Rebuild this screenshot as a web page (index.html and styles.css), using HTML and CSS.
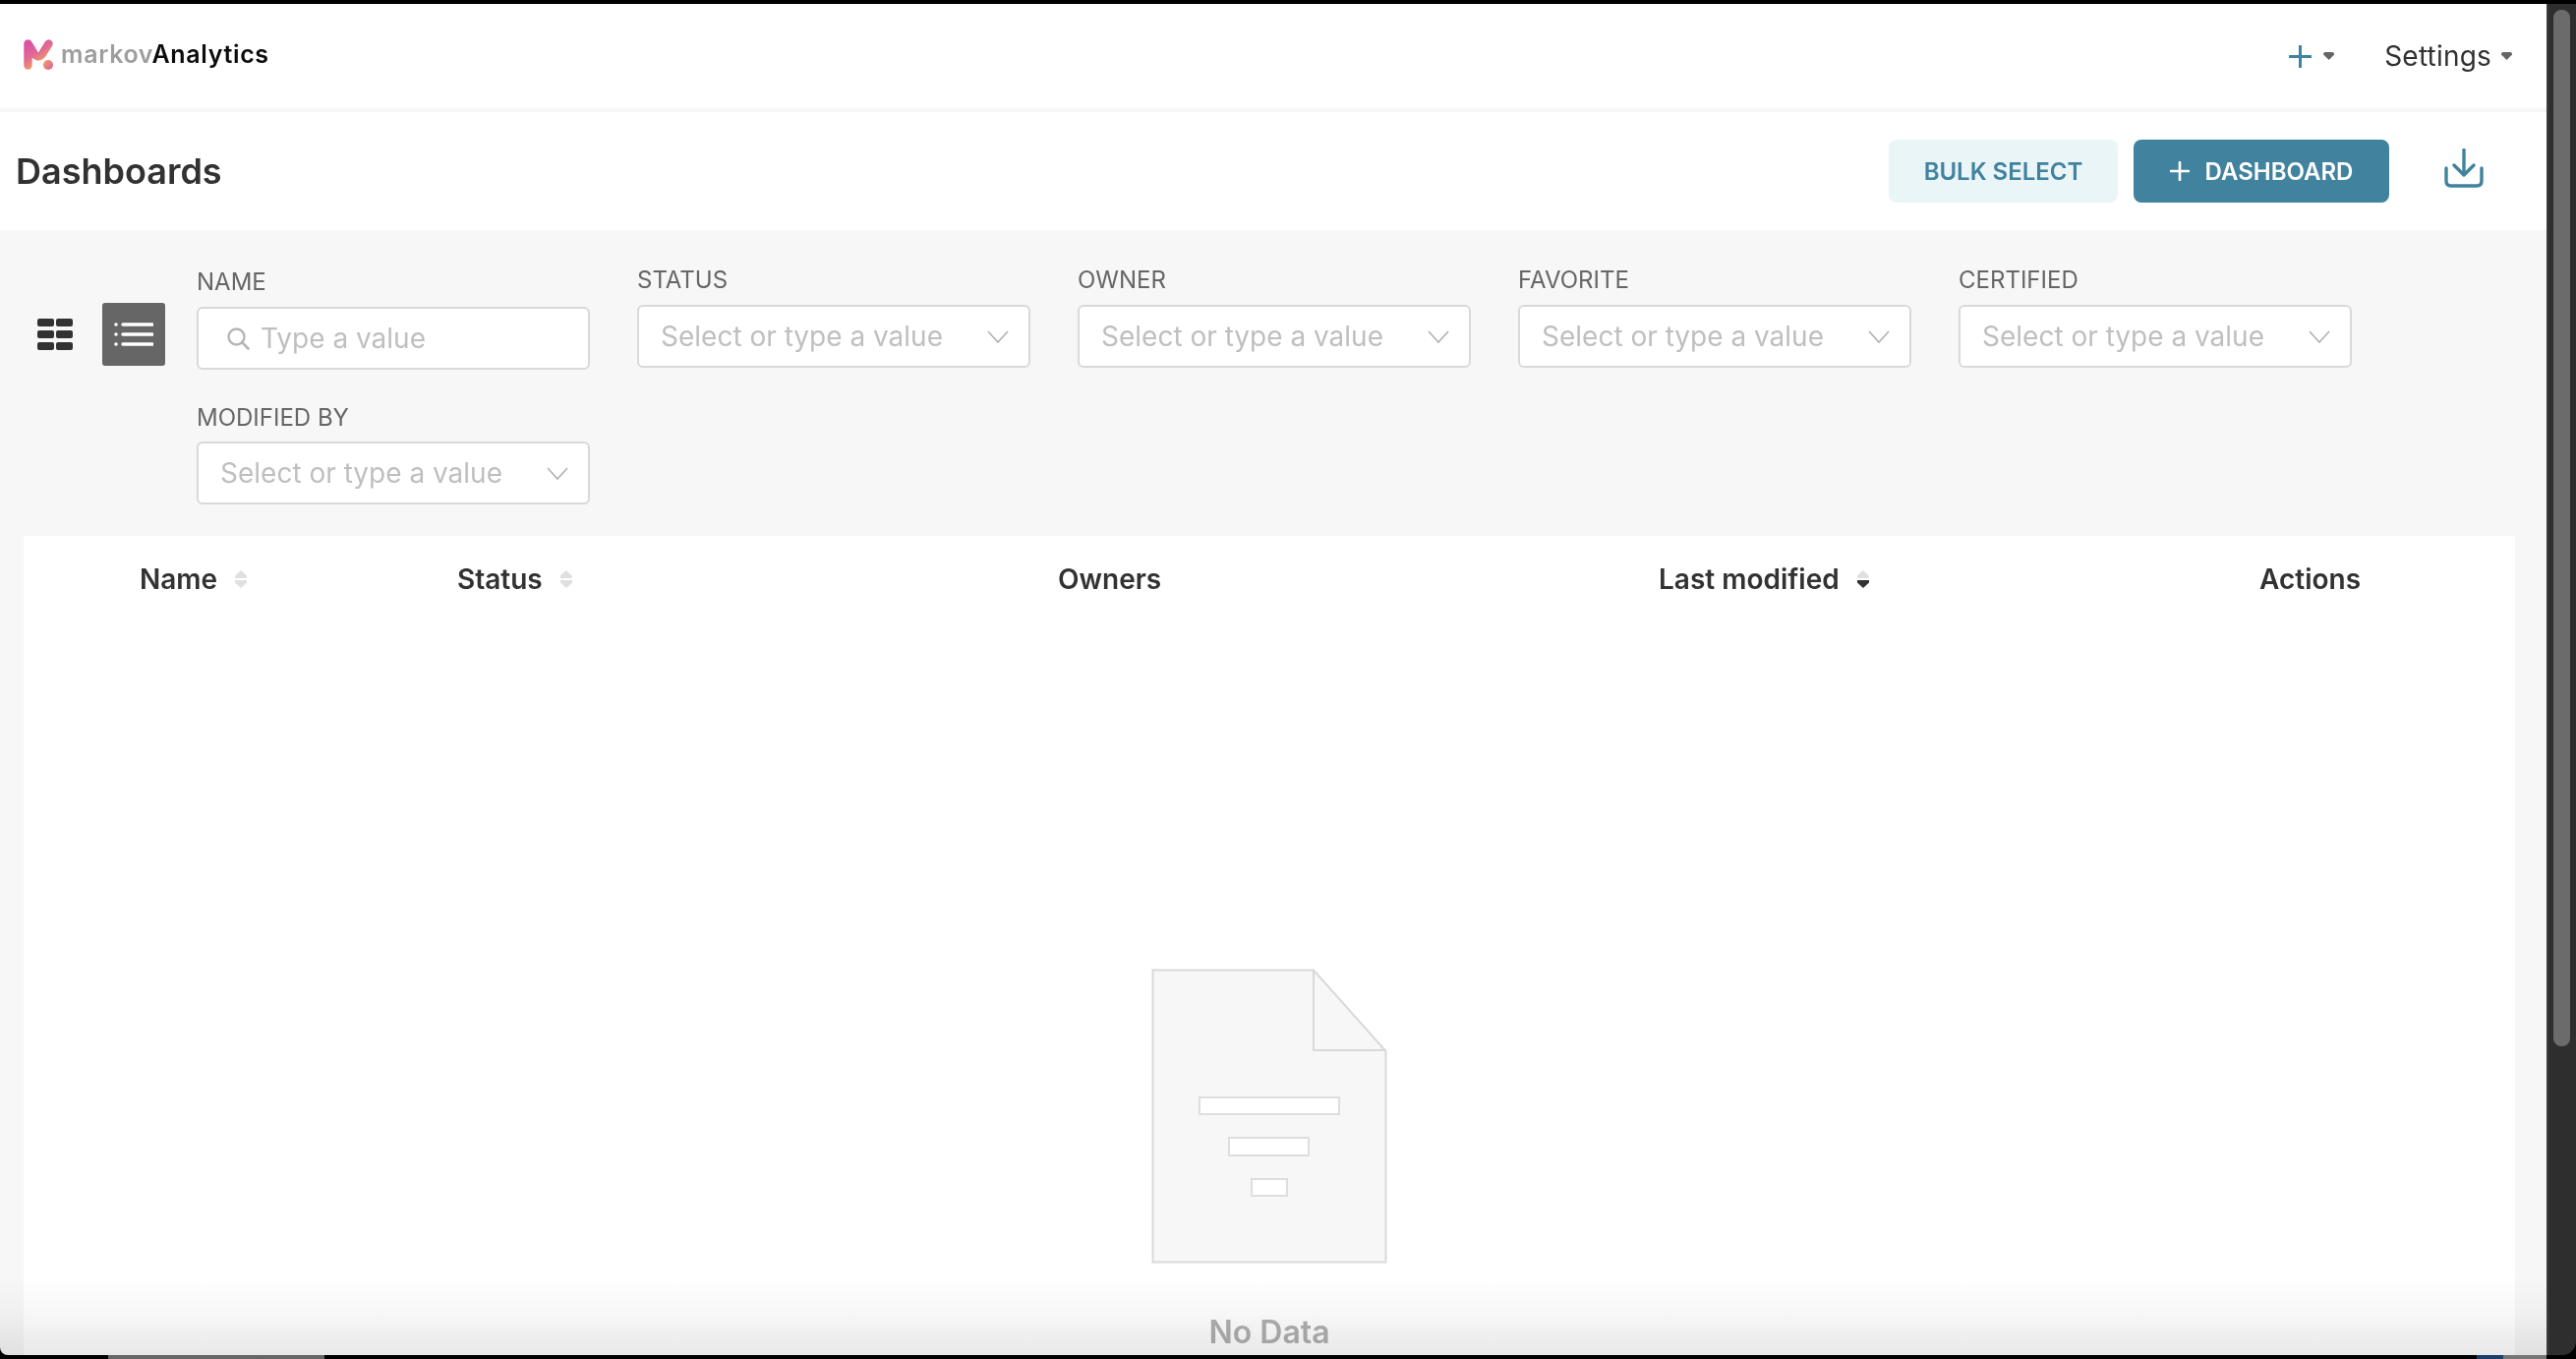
FILE: index.html
```html
<!DOCTYPE html>
<html lang="en">
<head>
  <meta charset="UTF-8" />
  <title>Dashboards</title>
  <link rel="stylesheet" href="styles.css">
</head>
<body>
  <div class="window">
    <div class="page">
      <nav class="navbar">
        <div class="brand">
          <svg class="brand-mark" viewBox="0 0 30 31" width="30" height="31">
            <defs>
              <linearGradient id="markGrad" x1="0.1" y1="0" x2="0.7" y2="1">
                <stop offset="0" stop-color="#dc549f" />
                <stop offset="0.45" stop-color="#e06a93" />
                <stop offset="1" stop-color="#f6a95a" />
              </linearGradient>
              <linearGradient id="dotGrad" x1="0" y1="0" x2="1" y2="1">
                <stop offset="0" stop-color="#f0a062" />
                <stop offset="1" stop-color="#de5c9c" />
              </linearGradient>
            </defs>
            <path d="M4.5 26.5 V4.5 L11 15 Q15 20 19 15 L25.5 4.5" fill="none" stroke="url(#markGrad)" stroke-width="8.4" stroke-linecap="round" stroke-linejoin="round" />
            <circle cx="25" cy="26" r="5" fill="url(#dotGrad)" />
          </svg>
          <span class="brand-name"><span class="brand-light">markov</span>Analytics</span>
        </div>
        <div class="nav-right">
          <span class="nav-item">
            <svg class="nav-plus" viewBox="0 0 23 23" width="23" height="23"><path d="M11.5 1 V22 M1 11.5 H22" stroke="#41829e" stroke-width="3" stroke-linecap="round" /></svg>
            <span class="caret"></span>
          </span>
          <span class="nav-item nav-settings">Settings <span class="caret"></span></span>
        </div>
      </nav>

      <header class="page-head">
        <h1>Dashboards</h1>
        <div class="head-actions">
          <button class="btn btn-light">BULK SELECT</button>
          <button class="btn btn-primary">
            <svg viewBox="0 0 20 20" width="20" height="20"><path d="M10 1 V19 M1 10 H19" stroke="#fff" stroke-width="2.6" stroke-linecap="round" /></svg>
            DASHBOARD
          </button>
          <svg class="download" viewBox="0 0 40 40" width="40" height="40">
            <path d="M20 1.5 V26 M10 17 L20 27 L30 17" fill="none" stroke="#41829e" stroke-width="3.4" stroke-linecap="round" stroke-linejoin="round" />
            <path d="M2 20 V33 Q2 38 7 38 H33 Q38 38 38 33 V20" fill="none" stroke="#41829e" stroke-width="3.4" stroke-linecap="round" />
          </svg>
        </div>
      </header>

      <section class="filter-bar">
        <div class="view-toggle">
          <span class="view-btn">
            <span class="grid-icon"><i></i><i></i><i></i><i></i><i></i><i></i></span>
          </span>
          <span class="view-btn active">
            <svg viewBox="0 0 40 24" width="40" height="24">
              <path d="M9 2 H39 M9 12 H39 M9 22 H39" stroke="#fff" stroke-width="3.4" stroke-linecap="round" />
              <circle cx="2" cy="2" r="1.8" fill="#fff" />
              <circle cx="2" cy="12" r="1.8" fill="#fff" />
              <circle cx="2" cy="22" r="1.8" fill="#fff" />
            </svg>
          </span>
        </div>
        <div class="filters">
          <div class="filter filter-name">
            <label>NAME</label>
            <div class="field">
              <svg class="search" viewBox="0 0 24 24" width="24" height="24">
                <circle cx="10.5" cy="10.5" r="8" fill="none" stroke="#b5b5b5" stroke-width="2.4" />
                <path d="M16.5 16.5 L22.5 22.5" stroke="#b5b5b5" stroke-width="2.6" stroke-linecap="round" />
              </svg>
              <span class="placeholder">Type a value</span>
            </div>
          </div>
          <div class="filter">
            <label>STATUS</label>
            <div class="field"><span class="placeholder">Select or type a value</span><svg class="chevron" viewBox="0 0 22 13" width="22" height="13"><path d="M1 1 L11 12 L21 1" fill="none" stroke="#b0b0b0" stroke-width="1.6" /></svg></div>
          </div>
          <div class="filter">
            <label>OWNER</label>
            <div class="field"><span class="placeholder">Select or type a value</span><svg class="chevron" viewBox="0 0 22 13" width="22" height="13"><path d="M1 1 L11 12 L21 1" fill="none" stroke="#b0b0b0" stroke-width="1.6" /></svg></div>
          </div>
          <div class="filter">
            <label>FAVORITE</label>
            <div class="field"><span class="placeholder">Select or type a value</span><svg class="chevron" viewBox="0 0 22 13" width="22" height="13"><path d="M1 1 L11 12 L21 1" fill="none" stroke="#b0b0b0" stroke-width="1.6" /></svg></div>
          </div>
          <div class="filter">
            <label>CERTIFIED</label>
            <div class="field"><span class="placeholder">Select or type a value</span><svg class="chevron" viewBox="0 0 22 13" width="22" height="13"><path d="M1 1 L11 12 L21 1" fill="none" stroke="#b0b0b0" stroke-width="1.6" /></svg></div>
          </div>
          <div class="filter filter-modified">
            <label>MODIFIED BY</label>
            <div class="field"><span class="placeholder">Select or type a value</span><svg class="chevron" viewBox="0 0 22 13" width="22" height="13"><path d="M1 1 L11 12 L21 1" fill="none" stroke="#b0b0b0" stroke-width="1.6" /></svg></div>
          </div>
        </div>
      </section>

      <section class="table-wrap">
        <div class="table-card">
          <div class="table-head">
            <div class="th">Name <span class="sort"><i class="up"></i><i class="down"></i></span></div>
            <div class="th">Status <span class="sort"><i class="up"></i><i class="down"></i></span></div>
            <div class="th">Owners</div>
            <div class="th">Last modified <span class="sort"><i class="up"></i><i class="down on"></i></span></div>
            <div class="th">Actions</div>
          </div>
          <div class="empty">
            <svg viewBox="0 0 240 300" width="240" height="300">
              <path d="M1.5 1.5 H165 L238.5 84 V298.5 H1.5 Z" fill="#f7f7f7" stroke="#d9d9d9" stroke-width="2" />
              <path d="M165 1.5 V83 H238.5" fill="none" stroke="#d9d9d9" stroke-width="2" />
              <rect x="49" y="131" width="142" height="17" fill="#fff" stroke="#dedede" stroke-width="2" />
              <rect x="79" y="172" width="81" height="18" fill="#fff" stroke="#dedede" stroke-width="2" />
              <rect x="102" y="214" width="36" height="17" fill="#fff" stroke="#dedede" stroke-width="2" />
            </svg>
            <p>No Data</p>
          </div>
        </div>
      </section>
      <div class="bottom-fade"></div>
    </div>
    <div class="scrollbar"><div class="thumb"></div></div>
  </div>
  <div class="dock">
    <span class="dock-gray"></span>
    <span class="dock-blue"></span>
    <span class="dock-end"></span>
  </div>
</body>
</html>
```

FILE: styles.css
```css
* {
  box-sizing: border-box;
}

body {
  margin: 0;
  height: 100vh;
  overflow: hidden;
  background: #000;
  font-family: Inter, 'Liberation Sans', sans-serif;
  color: #323232;
}

.window {
  display: flex;
  height: 1378px;
  padding-top: 4px;
}

.page {
  position: relative;
  flex: 1;
  display: flex;
  flex-direction: column;
  overflow: hidden;
  background: #f7f7f7;
  border-bottom-left-radius: 8px;
}

.scrollbar {
  width: 30px;
  background: #2e2e2e;
  border-left: 2px solid #3c3c3c;
  border-bottom-right-radius: 14px;
  padding: 6px 6px 0 5px;
}

.thumb {
  height: 1054px;
  background: #6b6b6b;
  border-radius: 8px;
}

.dock {
  height: 4px;
  display: flex;
  padding-left: 110px;
}

.dock-gray {
  width: 220px;
  background: #666;
}

.dock-blue {
  width: 27px;
  margin-left: 2189px;
  background: #1d3f66;
}

.dock-end {
  width: 44px;
  background: #777;
}

/* top nav */
.navbar {
  height: 106px;
  flex: none;
  background: #fff;
  margin-bottom: 4px;
  display: flex;
  justify-content: space-between;
  align-items: center;
  padding: 0 35px 0 24px;
}

.brand {
  display: flex;
  align-items: center;
  gap: 8px;
  margin-top: -4px;
}

.brand-name {
  font-size: 25px;
  font-weight: 600;
  color: #0c0c0c;
  letter-spacing: 0.65px;
}

.brand-light {
  color: #9e9e9e;
}

.nav-right {
  display: flex;
  align-items: center;
  gap: 51px;
}

.nav-item {
  display: flex;
  align-items: center;
  gap: 12px;
}

.nav-settings {
  font-size: 28px;
  letter-spacing: 0.2px;
  color: #323232;
  gap: 10px;
}

.caret {
  width: 11px;
  height: 8px;
  background: #666;
  clip-path: polygon(0 0, 100% 0, 100% 30%, 50% 100%, 0 30%);
  border-radius: 2px;
}

/* page title row */
.page-head {
  height: 120px;
  flex: none;
  background: #fff;
  display: flex;
  justify-content: space-between;
  align-items: center;
  padding: 0 64px 0 16px;
}

.page-head h1 {
  margin: 0;
  font-size: 36px;
  font-weight: 600;
}

.head-actions {
  display: flex;
  align-items: center;
}

.btn {
  height: 64px;
  border: none;
  border-radius: 8px;
  font-family: inherit;
  font-size: 24px;
  font-weight: 600;
  display: flex;
  align-items: center;
  justify-content: center;
}

.btn-light {
  width: 233px;
  background: #eaf5f8;
  color: #41829e;
  margin-right: 16px;
}

.btn-primary {
  width: 260px;
  background: #41829e;
  color: #fff;
  gap: 16px;
  margin-right: 56px;
}

.download {
  margin-top: -6px;
}

/* filters */
.filter-bar {
  height: 311px;
  flex: none;
  display: flex;
  padding: 36px 0 0 38px;
}

.view-toggle {
  width: 162px;
  flex: none;
  display: flex;
  align-items: flex-start;
  padding-top: 38px;
  gap: 30px;
}

.view-btn {
  width: 36px;
  height: 64px;
  display: flex;
  align-items: center;
  justify-content: center;
}

.view-btn.active {
  width: 64px;
  background: #666;
  border-radius: 3px;
}

.grid-icon {
  width: 36px;
  display: grid;
  grid-template-columns: 1fr 1fr;
  gap: 4px 2px;
}

.grid-icon i {
  height: 8px;
  background: #323232;
  border-radius: 2px;
}

.filters {
  display: flex;
  flex-wrap: wrap;
  align-content: flex-start;
  gap: 35px 48px;
  width: 2400px;
}

.filter {
  width: 400px;
}

.filter label {
  display: block;
  height: 40px;
  line-height: 30px;
  font-size: 24px;
  color: #666;
}

.filter-name {
  margin-top: 2px;
  margin-bottom: -2px;
}

.filter-modified {
  margin-right: 1800px;
}

.filter-modified label {
  line-height: 32px;
}

.field {
  height: 64px;
  background: #fff;
  border: 2px solid #d9d9d9;
  border-radius: 6px;
  display: flex;
  align-items: center;
  justify-content: space-between;
  padding: 0 20px 0 22px;
}

.filter-name .field {
  justify-content: flex-start;
  padding-left: 28px;
  gap: 11px;
}

.placeholder {
  font-size: 28px;
  color: #bfbfbf;
}

/* table */
.table-wrap {
  flex: 1;
  padding: 0 32px 0 24px;
  min-height: 0;
}

.table-card {
  height: 100%;
  background: #fff;
}

.table-head {
  display: grid;
  grid-template-columns: 323px 611px 611px 611px 1fr;
  padding-left: 118px;
  height: 88px;
}

.th {
  font-size: 28px;
  font-weight: 600;
  line-height: 32px;
  display: flex;
  align-items: center;
  gap: 18px;
}

.sort {
  display: flex;
  flex-direction: column;
  gap: 2px;
}

.sort i {
  width: 12px;
  height: 8px;
  background: #e0e0e0;
  clip-path: polygon(50% 0, 100% 70%, 100% 100%, 0 100%, 0 70%);
}

.sort i.down {
  transform: rotate(180deg);
}

.sort i.on {
  background: #323232;
}

.empty {
  display: flex;
  flex-direction: column;
  align-items: center;
  padding-top: 352px;
}

.empty svg {
  display: block;
}

.empty p {
  margin: 50px 0 0;
  font-size: 32px;
  font-weight: 600;
  color: #b0b0b0;
}

.bottom-fade {
  position: absolute;
  left: 0;
  right: 0;
  bottom: 0;
  height: 80px;
  background: linear-gradient(to bottom, #fff, #f8f8f8 45%, #e8e8e8);
  mix-blend-mode: multiply;
  pointer-events: none;
}
```
